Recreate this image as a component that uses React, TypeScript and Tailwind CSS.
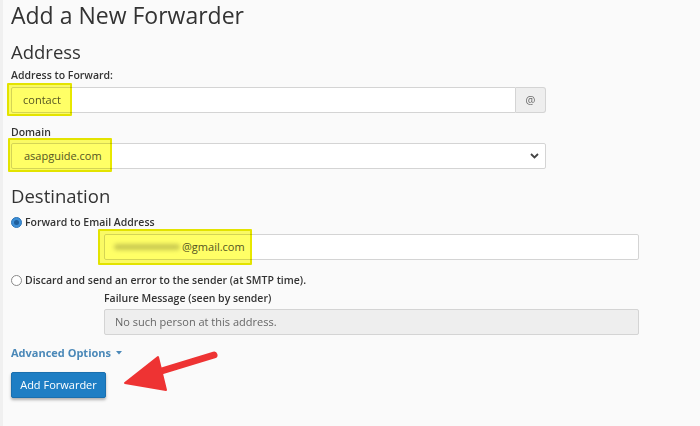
import React from "react";

function Highlight({ className }: { className: string }) {
  return (
    <div
      className={`pointer-events-none absolute bg-[#ffff66] border-[2px] border-[#e8e800] mix-blend-multiply rounded-[1px] ${className}`}
    />
  );
}

function Radio({ checked }: { checked?: boolean }) {
  return checked ? (
    <span className="inline-flex items-center justify-center w-[11px] h-[11px] rounded-full bg-[#3d8fd6] border border-[#2a74b8]">
      <span className="w-[5px] h-[5px] rounded-full bg-[#1e5e9c]" />
    </span>
  ) : (
    <span className="inline-block w-[11px] h-[11px] rounded-full bg-white border border-[#8a8a8a]" />
  );
}

export default function App() {
  return (
    <div
      className="relative w-[700px] h-[426px] overflow-hidden bg-[#fafafa] text-[#333]"
      style={{ fontFamily: '"Open Sans", "Liberation Sans", sans-serif' }}
    >
      <div className="absolute left-0 top-0 h-full w-[3px] bg-[#f0f0f0]" />
      <div className="pl-[11px]">
        <h1 className="pt-[1px] text-[23px] leading-[28px] font-normal text-[#333]">
          Add a New Forwarder
        </h1>
        <h2 className="mt-[11px] text-[18.5px] leading-[24px] font-normal">Address</h2>
        <div className="mt-[3px] text-[10.5px] leading-[16px] font-semibold text-[#333]">
          Address to Forward:
        </div>
        <div className="relative mt-[4px] flex w-[535px] h-[26px]">
          <div className="flex-1 flex items-center border border-[#d4d4d4] bg-white rounded-l-[2px] pl-[11px] text-[11px] text-[#555]">
            contact
          </div>
          <div className="w-[30px] flex items-center justify-center border border-l-0 border-[#d4d4d4] bg-[#eeeeee] rounded-r-[3px] text-[11px] text-[#666]">
            @
          </div>
          <Highlight className="left-[-4px] top-[-4px] w-[65px] h-[33px]" />
        </div>
        <div className="mt-[11px] text-[10.5px] leading-[16px] font-semibold">Domain</div>
        <div className="relative mt-[3px] flex items-center w-[535px] h-[26px] border border-[#d4d4d4] bg-white rounded-[2px] pl-[12px] pr-[6px] text-[11px] text-[#555]">
          <span className="flex-1">asapguide.com</span>
          <svg width="9" height="6" viewBox="0 0 9 6">
            <path d="M1 1 L4.5 4.5 L8 1" stroke="#444" strokeWidth="1.8" fill="none" />
          </svg>
          <Highlight className="left-[-4px] top-[-6px] w-[104px] h-[34px]" />
        </div>
        <h2 className="mt-[15px] text-[18.5px] leading-[24px] font-normal">Destination</h2>
        <div className="mt-[6px] flex items-center gap-[3px] text-[10.5px] leading-[16px] font-semibold">
          <Radio checked />
          <span>Forward to Email Address</span>
        </div>
        <div className="relative ml-[93px] mt-[4px] flex items-center w-[535px] h-[26px] border border-[#d4d4d4] bg-white rounded-[2px] pl-[9px] text-[11px] text-[#555]">
          <span className="inline-block w-[66px] h-[6px] rounded-full bg-[#c9c9c9] blur-[2px] mr-[2px]" />
          <span>@gmail.com</span>
          <Highlight className="left-[-7px] top-[-6px] w-[154px] h-[36px]" />
        </div>
        <div className="mt-[12px] flex items-center gap-[3px] text-[10.5px] leading-[16px] font-semibold">
          <Radio />
          <span>Discard and send an error to the sender (at SMTP time).</span>
        </div>
        <div className="ml-[93px] mt-[2px] text-[10.5px] leading-[16px] font-semibold">
          Failure Message (seen by sender)
        </div>
        <div className="ml-[93px] mt-[3px] flex items-center w-[535px] h-[26px] border border-[#d4d4d4] bg-[#eeeeee] rounded-[2px] pl-[10px] text-[11px] text-[#666]">
          No such person at this address.
        </div>
        <div className="mt-[10px] flex items-center gap-[5px] text-[11px] leading-[16px] font-bold text-[#4a88b8]">
          <span>Advanced Options</span>
          <svg width="6" height="4" viewBox="0 0 6 4">
            <path d="M0 0 L6 0 L3 3.5 Z" fill="#4a88b8" />
          </svg>
        </div>
        <button className="mt-[11px] w-[95px] h-[26px] rounded-[2px] bg-[#1e7ec4] border border-[#1a6fae] text-white text-[11px] shadow-[0_2px_3px_rgba(0,0,0,0.3)]">
          Add Forwarder
        </button>
      </div>
      <svg className="absolute left-0 top-0 pointer-events-none" width="700" height="426">
        <line x1="214" y1="355" x2="155" y2="373" stroke="#ee3333" strokeWidth="7" strokeLinecap="round" />
        <polygon points="125,383 158,357 166,390" fill="#ee3333" stroke="#ee3333" strokeWidth="2" strokeLinejoin="round" />
      </svg>
    </div>
  );
}
